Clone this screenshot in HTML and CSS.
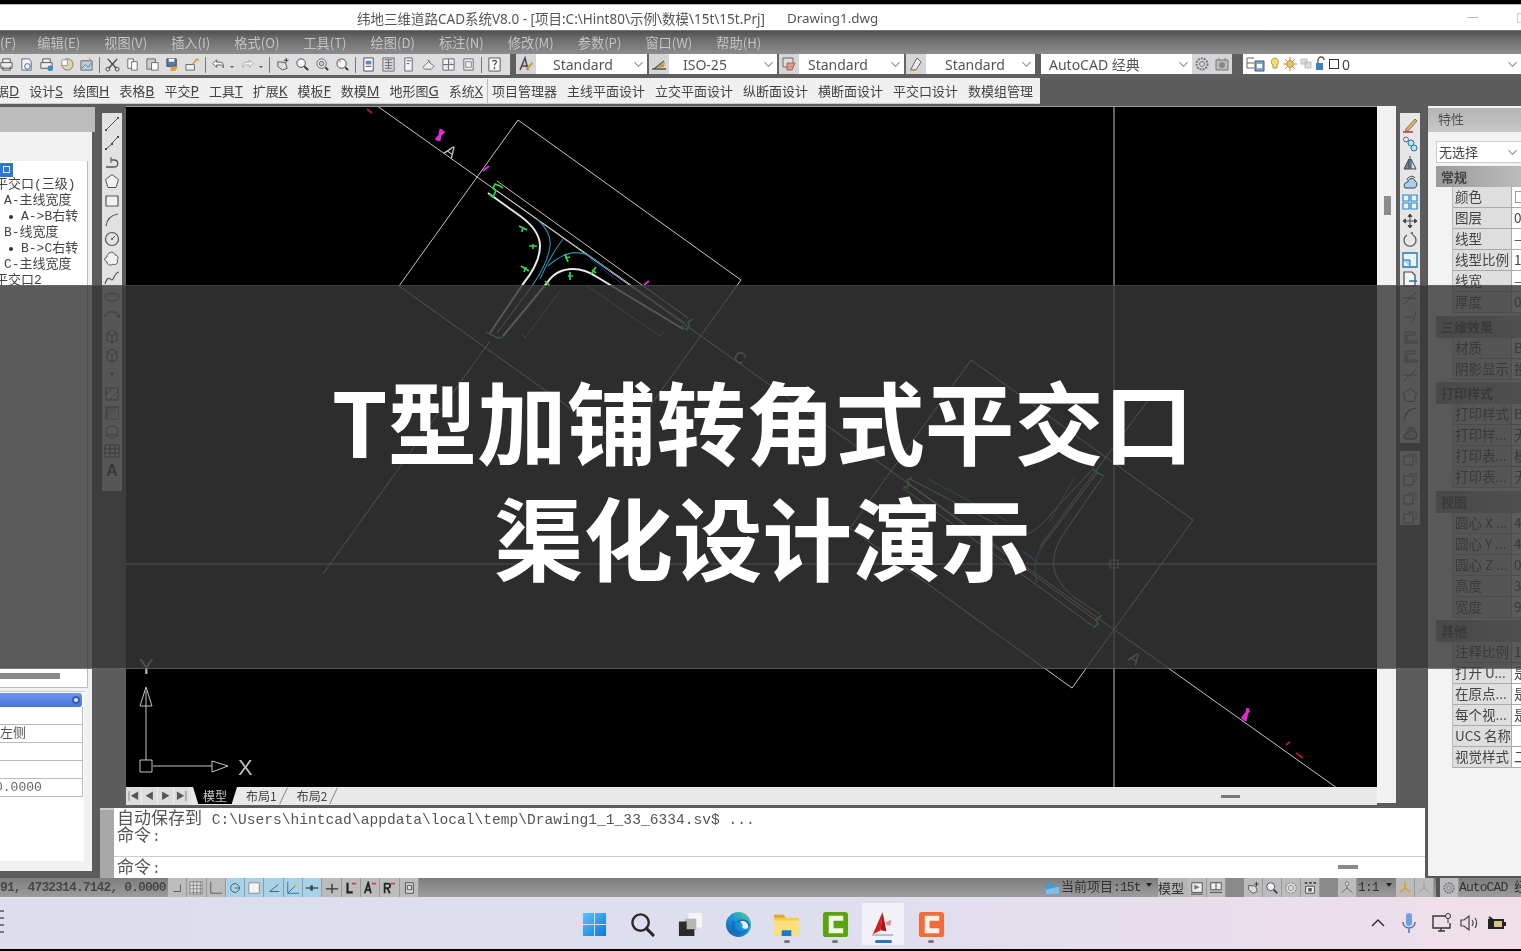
FILE: index.html
```html
<!DOCTYPE html>
<html lang="zh-CN">
<head>
<meta charset="utf-8">
<title>纬地三维道路CAD系统V8.0</title>
<link rel="stylesheet" href="styles.css">
</head>
<body>
<svg class="defs" aria-hidden="true">
  <symbol id="i-print" viewBox="0 0 16 16"><path d="M4 6V2h8v4M2 6h12v6H2zM4 10v4h8v-4" fill="#eee" stroke="#555"/></symbol>
  <symbol id="i-prev" viewBox="0 0 16 16"><path d="M3 2h8l2 3v9H3z" fill="#f4f4f4" stroke="#667"/><circle cx="9" cy="10" r="3" fill="none" stroke="#36a"/></symbol>
  <symbol id="i-plot" viewBox="0 0 16 16"><path d="M4 6V2h8v4M2 6h12v6H2z" fill="#eee" stroke="#555"/><circle cx="12" cy="12" r="3" fill="#3a8fc0"/></symbol>
  <symbol id="i-globe" viewBox="0 0 16 16"><circle cx="9" cy="8" r="6" fill="#e3d6a0" stroke="#777"/><path d="M3 3h6v6H3z" fill="#fff" stroke="#999"/></symbol>
  <symbol id="i-pub" viewBox="0 0 16 16"><path d="M2 4h12v10H2z" fill="#bcd" stroke="#667"/><path d="M3 12l4-4 3 3 3-5" fill="none" stroke="#686"/><path d="M10 1l4 3" stroke="#c93"/></symbol>
  <symbol id="i-cut" viewBox="0 0 16 16"><path d="M3 2l9 10M13 2L4 12" stroke="#444" stroke-width="1.4"/><circle cx="3" cy="13" r="2" fill="none" stroke="#444"/><circle cx="13" cy="13" r="2" fill="none" stroke="#444"/></symbol>
  <symbol id="i-copy" viewBox="0 0 16 16"><path d="M3 2h6v10H3z" fill="#fff" stroke="#666"/><path d="M7 5h6v9H7z" fill="#fff" stroke="#666"/></symbol>
  <symbol id="i-paste" viewBox="0 0 16 16"><path d="M2 2h9v11H2z" fill="#ccc" stroke="#666"/><path d="M7 6h7v8H7z" fill="#fff" stroke="#666"/></symbol>
  <symbol id="i-match" viewBox="0 0 16 16"><path d="M2 2h10v8H2z" fill="#5577aa" stroke="#446"/><path d="M4 2h6v3H4z" fill="#fff"/><path d="M6 10h8l-3 5H6z" fill="#d9a441"/></symbol>
  <symbol id="i-brush" viewBox="0 0 16 16"><path d="M1 8h9v6H1z" fill="#eee" stroke="#666"/><path d="M8 8l5-6M11 3h4" stroke="#c93" stroke-width="1.5"/></symbol>
  <symbol id="i-undo" viewBox="0 0 16 16"><path d="M6 3L2 7l4 4V8.500h4c2 0 3 1 3 3 1-3-.5-6-3-6H6z" fill="#fff" stroke="#555"/></symbol>
  <symbol id="i-redo" viewBox="0 0 16 16"><path d="M10 3l4 4-4 4V8.500H6c-2 0-3 1-3 3-1-3 .5-6 3-6h4z" fill="#f4f4f4" stroke="#aaa"/></symbol>
  <symbol id="i-drop" viewBox="0 0 6 16"><path d="M1 8h4L3 10z" fill="#555"/></symbol>
  <symbol id="i-pan" viewBox="0 0 16 16"><path d="M3 5l8 1 2 6-5 2-5-4z" fill="#ddd" stroke="#555"/><path d="M12 1v5M9.500 3.500h5" stroke="#333"/></symbol>
  <symbol id="i-zoom" viewBox="0 0 16 16"><circle cx="6.500" cy="6.500" r="4.500" fill="#f4f8fb" stroke="#445"/><path d="M10 10l4 4" stroke="#333" stroke-width="2"/></symbol>
  <symbol id="i-zoom2" viewBox="0 0 16 16"><circle cx="7" cy="7" r="5" fill="#f4f8fb" stroke="#556"/><circle cx="7" cy="7" r="2.500" fill="#ccc" stroke="#556"/><path d="M11 11l3 3" stroke="#333" stroke-width="2"/></symbol>
  <symbol id="i-zoom3" viewBox="0 0 16 16"><circle cx="7" cy="7" r="5" fill="#f4f8fb" stroke="#445"/><path d="M11 11l3 3" stroke="#333" stroke-width="2"/><path d="M3 3l3 2" stroke="#c33"/></symbol>
  <symbol id="i-panel1" viewBox="0 0 16 16"><path d="M3 1h10v14H3z" fill="#fff" stroke="#446"/><path d="M5 4h6v4H5z" fill="#5d86b3"/><path d="M5 10h6" stroke="#446"/></symbol>
  <symbol id="i-panel2" viewBox="0 0 16 16"><path d="M2 1h12v14H2z" fill="#ddd" stroke="#667"/><path d="M4 3h8M4 6h8M4 9h8M4 12h8M8 3v10" stroke="#667"/></symbol>
  <symbol id="i-panel3" viewBox="0 0 16 16"><path d="M4 1h8v14H4z" fill="#f2f2f2" stroke="#667"/><path d="M6 4h5M6 7h3" stroke="#667"/></symbol>
  <symbol id="i-stamp" viewBox="0 0 16 16"><path d="M2 11l6-6 6 5-3 3H4z" fill="#eee" stroke="#667"/><path d="M7 3l3 2" stroke="#667"/></symbol>
  <symbol id="i-calc" viewBox="0 0 16 16"><path d="M2 2h6v6H2zM8 8h6v6H8zM8 2h6v6M2 8v6h6" fill="#f2f2f2" stroke="#667"/></symbol>
  <symbol id="i-note" viewBox="0 0 16 16"><path d="M3 2h10v12H3z" fill="#eee" stroke="#667"/><path d="M5 5h6v6H5z" fill="none" stroke="#889"/></symbol>
  <symbol id="i-help" viewBox="0 0 16 16"><path d="M2 1h12v14H2z" fill="#f8f8f8" stroke="#555"/><path d="M6 5c0-2 4-2 4 0 0 2-2 2-2 4M8 11v2" fill="none" stroke="#444" stroke-width="1.3"/></symbol>
  <symbol id="i-tstyle" viewBox="0 0 16 16"><path d="M2 14L7 2l3 12M4 10h6" fill="none" stroke="#445" stroke-width="1.500"/><path d="M9 14l6-6-1-2-6 6z" fill="#c93"/></symbol>
  <symbol id="i-dstyle" viewBox="0 0 16 16"><path d="M1 13h14M3 13l10-8" stroke="#555" stroke-width="1.300"/><path d="M6 12l8-6-1 5z" fill="#c93"/></symbol>
  <symbol id="i-tbl" viewBox="0 0 16 16"><path d="M2 2h10v9H2z" fill="#ddd" stroke="#667"/><path d="M6 7h8l-3 7H6z" fill="#d98" stroke="#a65"/></symbol>
  <symbol id="i-mls" viewBox="0 0 16 16"><path d="M3 13L9 2l4 4-5 8z" fill="#eee" stroke="#667"/><path d="M2 14h5" stroke="#c93" stroke-width="2"/></symbol>
  <symbol id="i-gear" viewBox="0 0 16 16"><circle cx="8" cy="8" r="5.500" fill="none" stroke="#778" stroke-width="2" stroke-dasharray="2 1"/><circle cx="8" cy="8" r="2.500" fill="none" stroke="#778"/></symbol>
  <symbol id="i-shot" viewBox="0 0 16 16"><path d="M2 4h12v10H2z" fill="#bbb" stroke="#777"/><path d="M4 2l2 2M12 2l-2 2" stroke="#777"/><circle cx="8" cy="9" r="3" fill="#888"/></symbol>
  <symbol id="d-line" viewBox="0 0 16 16"><path d="M2 14L14 2" stroke="#555" fill="none"/><path d="M1 13h2v2H1zM13 1h2v2h-2z" fill="#555"/></symbol>
  <symbol id="d-pline" viewBox="0 0 16 16"><path d="M2 14l5-4 2-3 5-5" stroke="#555" fill="none"/><path d="M1 13h2v2H1zM7 8h2v2H7zM13 1h2v2h-2z" fill="#444"/></symbol>
  <symbol id="d-hook" viewBox="0 0 16 16"><path d="M2 13h8c5 0 5-7 0-7H7" stroke="#555" fill="none" stroke-width="1.300"/><path d="M7 3v6" stroke="#555"/></symbol>
  <symbol id="d-poly" viewBox="0 0 16 16"><path d="M8 1.500l6.500 5-2.500 8H4l-2.500-8z" fill="#f2f2f2" stroke="#555"/></symbol>
  <symbol id="d-rect" viewBox="0 0 16 16"><path d="M2 3h12v10H2z" fill="#f2f2f2" stroke="#555" stroke-width="1.200"/></symbol>
  <symbol id="d-arc" viewBox="0 0 16 16"><path d="M2 14C3 7 8 3 14 2" fill="none" stroke="#555" stroke-width="1.200"/></symbol>
  <symbol id="d-circ" viewBox="0 0 16 16"><circle cx="8" cy="8" r="6.500" fill="none" stroke="#555" stroke-width="1.200"/><path d="M8 8l3-3" stroke="#555"/><circle cx="8" cy="8" r="1" fill="#555"/></symbol>
  <symbol id="d-cloud" viewBox="0 0 16 16"><path d="M5 2c3-2 6 0 6 2 3 0 4 4 2 5 2 3-2 6-4 4-2 2-6 1-6-2-3-1-3-5 0-5 0-2 1-3 2-4z" fill="#f2f2f2" stroke="#555"/></symbol>
  <symbol id="d-spline" viewBox="0 0 16 16"><path d="M1 14c3-10 5-4 7-4s2-7 7-8" fill="none" stroke="#555" stroke-width="1.200"/></symbol>
  <symbol id="d-ell" viewBox="0 0 16 16"><ellipse cx="8" cy="8" rx="7" ry="4" fill="none" stroke="#555"/></symbol>
  <symbol id="d-earc" viewBox="0 0 16 16"><path d="M1 9c0-7 14-7 14 0" fill="none" stroke="#555"/><path d="M13 7l2 3 1-3" stroke="#555" fill="none"/></symbol>
  <symbol id="d-block" viewBox="0 0 16 16"><path d="M3 5l5-3 5 3v7l-5 3-5-3z" fill="#e8e8e8" stroke="#555"/><path d="M3 5l5 3 5-3M8 8v7" stroke="#555" fill="none"/></symbol>
  <symbol id="d-dot" viewBox="0 0 16 16"><circle cx="8" cy="8" r="1.500" fill="#555"/></symbol>
  <symbol id="d-hatch" viewBox="0 0 16 16"><path d="M2 2h12v12H2z" fill="#eee" stroke="#555"/><path d="M2 9l7-7M5 14l9-9M10 14l4-4" stroke="#777"/></symbol>
  <symbol id="d-grad" viewBox="0 0 16 16"><path d="M2 2h12v12H2z" fill="#bbb" stroke="#555"/><path d="M2 14L14 2v12z" fill="#ddd"/></symbol>
  <symbol id="d-reg" viewBox="0 0 16 16"><circle cx="8" cy="8" r="6" fill="#eee" stroke="#555"/><path d="M3 11h10" stroke="#555"/></symbol>
  <symbol id="d-table" viewBox="0 0 16 16"><path d="M1 2h14v12H1z" fill="#f2f2f2" stroke="#555"/><path d="M1 6h14M1 10h14M6 2v12M11 2v12" stroke="#555"/></symbol>
  <symbol id="m-erase" viewBox="0 0 16 16"><path d="M3 13L13 2l2 2L6 14z" fill="#d9b25f" stroke="#876"/><path d="M1 15h10" stroke="#b33" stroke-width="1.500"/></symbol>
  <symbol id="m-copy" viewBox="0 0 16 16"><circle cx="4" cy="3.500" r="2.500" fill="none" stroke="#667"/><circle cx="9" cy="7" r="3" fill="#bfe0f4" stroke="#27a"/><circle cx="12" cy="12" r="3" fill="#bfe0f4" stroke="#27a"/></symbol>
  <symbol id="m-mirror" viewBox="0 0 16 16"><path d="M8 1v14" stroke="#444"/><path d="M7 4L2 14h5z" fill="#6d8296" stroke="#345"/><path d="M9 4l5 10H9z" fill="#cfe3ef" stroke="#345"/></symbol>
  <symbol id="m-offset" viewBox="0 0 16 16"><path d="M3 14c-2-3 0-6 3-6 0-4 6-5 7-1 3 1 2 7-1 7z" fill="#a9d0e6" stroke="#345"/><path d="M5 6c1-4 6-5 8-2" fill="none" stroke="#345"/></symbol>
  <symbol id="m-array" viewBox="0 0 16 16"><path d="M1 1h6v6H1zM9 1h6v6H9zM1 9h6v6H1zM9 9h6v6H9z" fill="#e8f3fa" stroke="#2a86c8" stroke-width="1.200"/></symbol>
  <symbol id="m-move" viewBox="0 0 16 16"><path d="M8 1v14M1 8h14M8 1L6 3.500h4zM8 15l-2-2.500h4zM1 8l2.500-2v4zM15 8l-2.500-2v4z" fill="#445" stroke="#445"/></symbol>
  <symbol id="m-rot" viewBox="0 0 16 16"><path d="M5 3a6 6 0 1 0 6 0" fill="none" stroke="#555" stroke-width="1.300"/><path d="M11 3l-3-2 3-1z" fill="#555"/></symbol>
  <symbol id="m-scale" viewBox="0 0 16 16"><path d="M1 1h14v14H1z" fill="#e8f3fa" stroke="#27a" stroke-width="1.300"/><path d="M1 8h7v7" fill="#a9d0e6" stroke="#27a"/></symbol>
  <symbol id="m-stretch" viewBox="0 0 16 16"><path d="M2 1h8l3 3v11H2z" fill="#f4f4f4" stroke="#445" stroke-width="1.200"/><path d="M7 10h8" stroke="#27a" stroke-width="1.500"/></symbol>
  <symbol id="m-trim" viewBox="0 0 16 16"><path d="M2 14L14 2M1 8h14" stroke="#666" fill="none"/></symbol>
  <symbol id="m-ext" viewBox="0 0 16 16"><path d="M2 8h8M10 14l4-12" stroke="#666" fill="none"/></symbol>
  <symbol id="m-brk" viewBox="0 0 16 16"><path d="M3 3h10v3H5v6h10v2H3z" fill="none" stroke="#666"/></symbol>
  <symbol id="m-mini" viewBox="0 0 16 16"><path d="M2 4h9v9H2z" fill="#eee" stroke="#666"/><path d="M6 2h8v8" fill="none" stroke="#888"/></symbol>
</svg>

<div class="page">
  <div class="app">
    <div class="strip"></div>
    <header class="titlebar">
      <span class="ttext">纬地三维道路CAD系统V8.0 - [项目:C:\Hint80\示例\数模\15t\15t.Prj]</span>
      <span class="ttext tdoc">Drawing1.dwg</span>
      <span class="winbtn winmin"></span>
      <span class="winbtn winmax"></span>
    </header>

    <nav class="menubar">
      <span>(F)</span><span>编辑(E)</span><span>视图(V)</span><span>插入(I)</span><span>格式(O)</span><span>工具(T)</span><span>绘图(D)</span><span>标注(N)</span><span>修改(M)</span><span>参数(P)</span><span>窗口(W)</span><span>帮助(H)</span>
    </nav>

    <div class="toolbar">
      <div class="tgroup ticons">
        <svg class="ic"><use href="#i-print"/></svg><svg class="ic"><use href="#i-prev"/></svg><svg class="ic"><use href="#i-plot"/></svg><svg class="ic"><use href="#i-globe"/></svg><svg class="ic"><use href="#i-pub"/></svg>
        <i class="sep"></i>
        <svg class="ic"><use href="#i-cut"/></svg><svg class="ic"><use href="#i-copy"/></svg><svg class="ic"><use href="#i-paste"/></svg><svg class="ic"><use href="#i-match"/></svg><svg class="ic"><use href="#i-brush"/></svg>
        <i class="sep"></i>
        <svg class="ic"><use href="#i-undo"/></svg><svg class="ic-drop"><use href="#i-drop"/></svg><svg class="ic"><use href="#i-redo"/></svg><svg class="ic-drop"><use href="#i-drop"/></svg>
        <i class="sep"></i>
        <svg class="ic"><use href="#i-pan"/></svg><svg class="ic"><use href="#i-zoom"/></svg><svg class="ic"><use href="#i-zoom2"/></svg><svg class="ic"><use href="#i-zoom3"/></svg>
        <i class="sep"></i>
        <svg class="ic"><use href="#i-panel1"/></svg><svg class="ic"><use href="#i-panel2"/></svg><svg class="ic"><use href="#i-panel3"/></svg><svg class="ic"><use href="#i-stamp"/></svg><svg class="ic"><use href="#i-calc"/></svg><svg class="ic"><use href="#i-note"/></svg>
        <i class="sep"></i>
        <svg class="ic"><use href="#i-help"/></svg>
      </div>
      <div class="tgroup combos">
        <div class="combo c1"><svg class="ic cic"><use href="#i-tstyle"/></svg><span class="cval v1">Standard</span><i class="chev"></i></div>
        <div class="combo c2"><svg class="ic cic"><use href="#i-dstyle"/></svg><span class="cval v2">ISO-25</span><i class="chev"></i></div>
        <div class="combo c3"><svg class="ic cic"><use href="#i-tbl"/></svg><span class="cval v3">Standard</span><i class="chev"></i></div>
        <div class="combo c4"><svg class="ic cic"><use href="#i-mls"/></svg><span class="cval v4">Standard</span><i class="chev"></i></div>
      </div>
      <div class="tgroup wsp">
        <div class="combo c5"><span class="cval v5">AutoCAD 经典</span><i class="chev"></i></div>
        <svg class="ic gearic"><use href="#i-gear"/></svg><svg class="ic gearic"><use href="#i-shot"/></svg>
      </div>
      <div class="tgroup layer">
        <svg class="lic" viewBox="0 0 20 18"><path d="M1 3h7M1 8h7M1 13h7M1 3v10" stroke="#666" fill="none"/><path d="M9 6h9v10H9z" fill="#7fa8cc" stroke="#456"/><path d="M11 9h5v4h-5z" fill="#fff"/></svg>
        <svg class="lmini" viewBox="0 0 60 16"><path d="M6 2a4 4 0 0 1 3 7v3H5V9a4 4 0 0 1 1-7z" fill="#f4de82" stroke="#b99a3c"/><circle cx="22" cy="8" r="3.500" fill="#e8c560" stroke="#b9923c"/><path d="M22 1v3M22 12v3M15 8h3M26 8h3M17 3l2 2M25 11l2 2M17 13l2-2M25 5l2-2" stroke="#b9923c"/><path d="M33 3h6v5h-6zM37 6h6v6h-6z" fill="#ddd" stroke="#bbb"/><path d="M48 7h7v7h-7z" fill="#3f82c2"/><path d="M50 7V4a3 3 0 0 1 6 0" fill="none" stroke="#555" stroke-width="1.300"/></svg>
        <i class="lsq"></i><span class="lname">0</span><i class="chev chev-end"></i>
      </div>
    </div>

    <div class="toolbar2">
      <div class="tb2in">
        <span>据<u>D</u></span><span>设计<u>S</u></span><span>绘图<u>H</u></span><span>表格<u>B</u></span><span>平交<u>P</u></span><span>工具<u>T</u></span><span>扩展<u>K</u></span><span>模板<u>F</u></span><span>数模<u>M</u></span><span>地形图<u>G</u></span><span>系统<u>X</u></span>
        <i class="vsep"></i>
        <span>项目管理器</span><span>主线平面设计</span><span>立交平面设计</span><span>纵断面设计</span><span>横断面设计</span><span>平交口设计</span><span>数模组管理</span>
      </div>
    </div>

    <main class="work">
      <aside class="left">
        <div class="lbar"></div>
        <div class="lbody">
          <div class="tree">
            <div class="tsel"><i></i></div>
            <div class="tl">平交口(三级)</div>
            <div class="tl ind1">A-主线宽度</div>
            <div class="tl ind2"><b></b>A-&gt;B右转</div>
            <div class="tl ind1">B-线宽度</div>
            <div class="tl ind2"><b></b>B-&gt;C右转</div>
            <div class="tl ind1">C-主线宽度</div>
            <div class="tl">平交口2</div>
            <div class="hscroll"><i></i></div>
          </div>
          <div class="pbox">
            <div class="phead"><i></i></div>
            <div class="prw"></div>
            <div class="prw">左侧</div>
            <div class="prw"></div>
            <div class="prw"></div>
            <div class="prw pclip">0.0000</div>
          </div>
        </div>
      </aside>

      <section class="center">
        <div class="upper">
          <div class="dbar">
            <svg class="dic"><use href="#d-line"/></svg><svg class="dic"><use href="#d-pline"/></svg><svg class="dic"><use href="#d-hook"/></svg><svg class="dic"><use href="#d-poly"/></svg><svg class="dic"><use href="#d-rect"/></svg><svg class="dic"><use href="#d-arc"/></svg><svg class="dic"><use href="#d-circ"/></svg><svg class="dic"><use href="#d-cloud"/></svg><svg class="dic"><use href="#d-spline"/></svg><svg class="dic"><use href="#d-ell"/></svg><svg class="dic"><use href="#d-earc"/></svg><svg class="dic"><use href="#d-block"/></svg><svg class="dic"><use href="#d-block"/></svg><svg class="dic"><use href="#d-dot"/></svg><svg class="dic"><use href="#d-hatch"/></svg><svg class="dic"><use href="#d-grad"/></svg><svg class="dic"><use href="#d-reg"/></svg><svg class="dic"><use href="#d-table"/></svg><span class="dic dictxt">A</span>
          </div>
          <div class="canvcol">
            <div class="canvas">
              <svg class="cad" viewBox="126 106 1251 681">
                <g class="w">
                  <path d="M366 97L1337 787"/>
                  <path d="M518 119L741 279L622 444L399 285Z"/>
                  <path d="M971 359L1193 519L1072 687L850 527Z"/>
                  <path d="M323 573L490 340"/>
                  <path d="M1040 545L1155 390"/>
                  <path d="M1114 106V787M126 563H1377"/>
                  <path d="M1110 559h8v8h-8z"/>
                  <path d="M497 180L688 317M493 187L685 322"/>
                  <path d="M497 332L532 285M503 335L547 282"/>
                  <path d="M503 335L547 282Q556 268 573 268Q585 268 597 276L683 328" class="t"/>
                  <path d="M488 192L516 212Q540 228 540 245Q540 262 523 283L490 332" class="t"/>
                  <path d="M910 478L1000 525Q1020 535 1030 532Q1040 527 1058 505L1093 468"/>
                  <path d="M1102 477L1062 535Q1050 555 1055 572Q1060 585 1075 597L1100 613"/>
                  <path d="M1097 472L1040 548M903 487L1093 625M907 482L1097 620"/>
                  <path d="M146 690V759M153 765H212"/>
                  <path d="M146 686L152 705H140ZM140 759h12v12h-12zM212 760L228 765L212 771Z"/>
                </g>
                <g class="c">
                  <path d="M537 218Q552 232 550 245Q548 262 532 285M563 238Q550 255 540 278M548 265Q570 245 590 255L610 270"/>
                  <path d="M1023 550Q1035 560 1040 563M1040 548Q1032 565 1037 582"/>
                </g>
                <path class="db" d="M590 258L622 283"/>
                <g class="g">
                  <path d="M489 193l4 3 3-6-3-3 2-4 5 2 3 2M486 331l6 3 6 3 5-1M681 325l6 4 2-5-1-3 5-3M903 485l4 2 2-5-2-3 5-2M1092 468l6 4 6 3M1093 627l5-4-2-4 6-5"/>
                  <path d="M519 225l8 4m-4-3l-1 5M529 245h8m-4-2v5M521 265l8 5m-3-4l-2 5M565 253l3 8m-3-4l5-1M570 271v8m-2-4h5M596 266l-5 7m1-4l4 3M545 280l5 5"/>
                  <path class="gd" d="M560 290L525 337M587 285L660 335M521 333l6 5M660 335l4-5M928 478L1007 520M1050 520L1075 475"/>
                </g>
                <g class="m">
                  <path d="M436 139L444 130M441 128l-2 12" stroke-width="3"/>
                  <path d="M1242 718L1249 709M1248 707l-3 13" stroke-width="3"/>
                  <path d="M483 170l6-5M644 284l5-4" stroke-width="2"/>
                </g>
                <path class="r" d="M367 108l5 4M1286 744l4-3M1296 752l7 5"/>
                <text class="cadt" x="446" y="157" transform="rotate(35 453 150)">A</text>
                <text class="cadt" x="735" y="363" transform="rotate(35 742 356)">C</text>
                <text class="cadt" x="1130" y="664" transform="rotate(35 1137 657)">A</text>
                <text class="cadt big" x="238" y="774">X</text>
                <text class="cadt big" x="139" y="673">Y</text>
              </svg>
            </div>
            <div class="tabs">
              <div class="nav"><i>|◀</i><i>◀</i><i>▶</i><i>▶|</i></div>
              <span class="tab on">模型</span><span class="tab">布局1</span><i class="tsl"></i><span class="tab">布局2</span><i class="tsl"></i>
              <i class="thandle"></i>
            </div>
          </div>
          <div class="vscroll"><i></i></div>
          <div class="mbar">
            <svg class="dic"><use href="#m-erase"/></svg><svg class="dic"><use href="#m-copy"/></svg><svg class="dic"><use href="#m-mirror"/></svg><svg class="dic"><use href="#m-offset"/></svg><svg class="dic"><use href="#m-array"/></svg><svg class="dic"><use href="#m-move"/></svg><svg class="dic"><use href="#m-rot"/></svg><svg class="dic"><use href="#m-scale"/></svg><svg class="dic"><use href="#m-stretch"/></svg><svg class="dic"><use href="#m-trim"/></svg><svg class="dic"><use href="#m-ext"/></svg><svg class="dic"><use href="#m-brk"/></svg><svg class="dic"><use href="#m-brk"/></svg><svg class="dic"><use href="#m-trim"/></svg><svg class="dic"><use href="#d-poly"/></svg><svg class="dic"><use href="#d-arc"/></svg><svg class="dic"><use href="#m-offset"/></svg>
            <i class="mgap"></i>
            <svg class="dic"><use href="#m-mini"/></svg><svg class="dic"><use href="#m-mini"/></svg><svg class="dic"><use href="#m-mini"/></svg><svg class="dic"><use href="#m-mini"/></svg>
          </div>
        </div>
        <div class="cmd">
          <div class="grip"></div>
          <div class="cbody">
            <div class="hist">
              <div class="cl"><span class="cj">自动保存到</span> C:\Users\hintcad\appdata\local\temp\Drawing1_1_33_6334.sv$ ...</div>
              <div class="cl"><span class="cj">命令</span>:</div>
            </div>
            <div class="cin"><span class="cj">命令</span>:<i></i></div>
          </div>
        </div>
      </section>

      <aside class="props">
        <div class="ptitle">特性</div>
        <div class="pbody">
          <div class="psel"><span>无选择</span><i class="chev"></i></div>
          <div class="sect first">常规</div>
          <div class="row"><b>颜色</b><span>□</span></div>
          <div class="row"><b>图层</b><span>0</span></div>
          <div class="row"><b>线型</b><span>—</span></div>
          <div class="row"><b>线型比例</b><span>1</span></div>
          <div class="row"><b>线宽</b><span>—</span></div>
          <div class="row"><b>厚度</b><span>0</span></div>
          <div class="sect">三维效果</div>
          <div class="row"><b>材质</b><span>B</span></div>
          <div class="row"><b>阴影显示</b><span>投</span></div>
          <div class="sect">打印样式</div>
          <div class="row"><b>打印样式</b><span>B</span></div>
          <div class="row"><b>打印样...</b><span>无</span></div>
          <div class="row"><b>打印表...</b><span>模</span></div>
          <div class="row"><b>打印表...</b><span>无</span></div>
          <div class="sect">视图</div>
          <div class="row"><b>圆心 X ...</b><span>4</span></div>
          <div class="row"><b>圆心 Y ...</b><span>4</span></div>
          <div class="row"><b>圆心 Z ...</b><span>0</span></div>
          <div class="row"><b>高度</b><span>3</span></div>
          <div class="row"><b>宽度</b><span>9</span></div>
          <div class="sect">其他</div>
          <div class="row"><b>注释比例</b><span>1</span></div>
          <div class="row"><b>打开 U...</b><span>是</span></div>
          <div class="row"><b>在原点...</b><span>是</span></div>
          <div class="row"><b>每个视...</b><span>是</span></div>
          <div class="row"><b>UCS 名称</b><span></span></div>
          <div class="row"><b>视觉样式</b><span>二</span></div>
        </div>
      </aside>
    </main>

    <footer class="status">
      <span class="coords">91, 4732314.7142, 0.0000</span>
      <div class="sicons">
        <span class="si"><svg viewBox="0 0 16 16"><path d="M12 4v8H4" fill="none" stroke="#555"/></svg></span>
        <span class="si"><svg viewBox="0 0 16 16"><path d="M1 1h14v14H1zM1 5h14M1 9h14M1 13h14M5 1v14M9 1v14M13 1v14" fill="#ddd" stroke="#666" stroke-width=".7"/></svg></span>
        <span class="si"><svg viewBox="0 0 16 16"><path d="M2 1v13h13" fill="none" stroke="#555"/></svg></span>
        <span class="si on"><svg viewBox="0 0 16 16"><circle cx="8" cy="8" r="5" fill="none" stroke="#456"/><path d="M8 8h6" stroke="#456"/></svg></span>
        <span class="si on"><svg viewBox="0 0 16 16"><path d="M2 2h12v12H2z" fill="#f4f4f4" stroke="#888"/><path d="M2 2h4" stroke="#d88"/></svg></span>
        <span class="si on"><svg viewBox="0 0 16 16"><path d="M13 4L3 12h11" fill="none" stroke="#456"/></svg></span>
        <span class="si on"><svg viewBox="0 0 16 16"><path d="M2 1v13h13M2 14L12 4" fill="none" stroke="#369"/><path d="M10 2l4 2-3 3z" fill="#e5c14e"/></svg></span>
        <span class="si on"><svg viewBox="0 0 16 16"><path d="M1 8h14" stroke="#345" stroke-width="1.500"/><path d="M6 5h3v6H6z" fill="#345"/></svg></span>
        <span class="si"><svg viewBox="0 0 16 16"><path d="M1 9h14M8 3v11" stroke="#333" stroke-width="1.500"/></svg></span>
        <span class="si"><svg viewBox="0 0 16 16"><path d="M4 2v11h6" fill="none" stroke="#222" stroke-width="2.500"/><path d="M9 3h5" stroke="#c44" stroke-width="2"/></svg></span>
        <span class="si"><svg viewBox="0 0 16 16"><path d="M2 14L6 2l3 12M4 10h4" fill="none" stroke="#222" stroke-width="2"/><path d="M10 3h5" stroke="#c44" stroke-width="2"/></svg></span>
        <span class="si"><svg viewBox="0 0 16 16"><path d="M3 14V3h4c3 0 3 5 0 5H3M6 8l3 6" fill="none" stroke="#222" stroke-width="2"/><path d="M10 3h5" stroke="#c44" stroke-width="2"/></svg></span>
        <span class="si"><svg viewBox="0 0 16 16"><path d="M4 2h9v12H4z" fill="#ddd" stroke="#444"/><path d="M6 5h5v5H6z" fill="none" stroke="#444"/></svg></span>
      </div>
      <div class="sright">
        <svg class="sfold" viewBox="0 0 16 16"><path d="M1 3h6v3h8v9H1z" fill="#3f9ad6"/><path d="M1 10l14-3v8H1z" fill="#78c0ea"/></svg>
        <span class="stx proj"><span class="sc">当前项目</span>:15t</span><i class="caret"></i>
        <span class="stx model">模型</span>
        <span class="si sq"><svg viewBox="0 0 16 16"><path d="M2 2h12v11H2z" fill="#eee" stroke="#444"/><path d="M5 4l6 3-6 3z" fill="#777"/><path d="M1 15h14" stroke="#444"/></svg></span>
        <span class="si sq"><svg viewBox="0 0 16 16"><path d="M2 2h12v8H2z" fill="#eee" stroke="#444"/><path d="M8 2v8" stroke="#444"/><path d="M1 13h14" stroke="#444"/></svg></span>
        <i class="sdark"></i>
        <span class="si sq"><svg viewBox="0 0 16 16"><use href="#i-pan"/></svg></span>
        <span class="si sq"><svg viewBox="0 0 16 16"><use href="#i-zoom"/></svg></span>
        <span class="si sq"><svg viewBox="0 0 16 16"><circle cx="8" cy="8" r="6" fill="#ddd" stroke="#888"/><circle cx="8" cy="8" r="3" fill="none" stroke="#888"/></svg></span>
        <span class="si sq"><svg viewBox="0 0 16 16"><path d="M3 6h10v8H3z" fill="#eee" stroke="#444"/><path d="M2 2h3M7 2h3M12 2h3" stroke="#444" stroke-width="2"/><path d="M6 8h4v4H6z" fill="#555"/></svg></span>
        <i class="sdark"></i>
        <span class="si sq"><svg viewBox="0 0 16 16"><path d="M8 1v7L2 13M8 8l6 5" fill="none" stroke="#667"/><circle cx="8" cy="3" r="2" fill="#eee" stroke="#667"/></svg></span>
        <span class="stx ratio">1:1</span><i class="caret"></i>
        <span class="si sq"><svg viewBox="0 0 16 16"><path d="M8 1v7L2 13M8 8l6 5" fill="none" stroke="#d9a441" stroke-width="2"/></svg></span>
        <span class="si sq"><svg viewBox="0 0 16 16"><path d="M8 1v7L2 13M8 8l6 5" fill="none" stroke="#999"/></svg></span>
        <i class="sdark thin"></i>
        <span class="si sq"><svg viewBox="0 0 16 16"><use href="#i-gear"/></svg></span>
        <span class="stx acad">AutoCAD 经典</span>
      </div>
    </footer>

    <div class="taskbar">
      <div class="widget"></div>
      <div class="tcenter">
        <span class="tk"><svg viewBox="0 0 28 28"><defs><linearGradient id="wg" x1="0" y1="0" x2="1" y2="1"><stop offset="0" stop-color="#5cc4f4"/><stop offset="1" stop-color="#0f78d6"/></linearGradient></defs><path d="M2 2h11.500v11.500H2zM14.500 2H26v11.500H14.500zM2 14.500h11.500V26H2zM14.500 14.500H26V26H14.500z" fill="url(#wg)"/></svg></span>
        <span class="tk"><svg viewBox="0 0 28 28"><circle cx="12" cy="12" r="8.500" fill="none" stroke="#2a2a2a" stroke-width="2.500"/><path d="M18 18l7 7" stroke="#2a2a2a" stroke-width="3" stroke-linecap="round"/></svg></span>
        <span class="tk"><svg viewBox="0 0 28 28"><path d="M12 2h14v15H12z" fill="#f6f6f8"/><path d="M8 8h12v12H8z" fill="#b5b5b5"/><path d="M2 11h8v8h8v7H2z" fill="#2b2b2b"/></svg></span>
        <span class="tk tk-p"><svg viewBox="0 0 28 28"><defs><linearGradient id="eg" x1="0" y1="1" x2="1" y2="0"><stop offset="0" stop-color="#0c59a8"/><stop offset=".55" stop-color="#1f9bd8"/><stop offset="1" stop-color="#5fd07c"/></linearGradient></defs><circle cx="14" cy="14" r="13" fill="url(#eg)"/><path d="M26 16c0-7-9-10-14-5-3 3-2 9 3 10 4 1 7-1 9-3-2 6-11 9-17 5C8 21 5 15 8 10" fill="#1570c4"/><path d="M15 11c5-2 9 1 9 5 0 3-5 3-6 1 1-3-1-5-3-6z" fill="#eef2f8"/></svg><b></b></span>
        <span class="tk tk-p run"><svg viewBox="0 0 28 28"><path d="M1 4h10l2 3h14v19H1z" fill="#f5cd47"/><path d="M1 4h10l2 3H1z" fill="#d9a92e"/><path d="M1 10h26v16H1z" fill="#fbe17e"/><path d="M9 20h10v6H9z" fill="#1b78d0"/></svg><b></b></span>
        <span class="tk tk-p run"><svg viewBox="0 0 28 28"><rect x="1" y="1" width="26" height="26" rx="3" fill="#5aa412"/><path d="M7 5h15v5H12v8h10v5H7z" fill="#f2f7ea"/></svg><b></b></span>
        <span class="tk tk-p active"><svg viewBox="0 0 28 28"><path d="M13 1L3 24l8-4z" fill="#d71920"/><path d="M13 1l4 20-6-1z" fill="#a9141a"/><path d="M16 12l6-3-1 6h-3z" fill="#e88"/><path d="M2 25h22" stroke="#bbb" stroke-width="2"/></svg><b></b></span>
        <span class="tk tk-p run"><svg viewBox="0 0 28 28"><rect x="1" y="1" width="26" height="26" rx="3" fill="#f26b3a"/><path d="M7 5h15v5H12v8h10v5H7z" fill="#fff1ea"/></svg><b></b></span>
      </div>
      <div class="tray">
        <svg class="t-chev" viewBox="0 0 16 10"><path d="M2 8l6-6 6 6" fill="none" stroke="#333" stroke-width="1.500"/></svg>
        <svg class="t-mic" viewBox="0 0 14 22"><rect x="4" y="1" width="6" height="13" rx="3" fill="#6f9fe0"/><path d="M1 10c0 8 12 8 12 0M7 17v4" fill="none" stroke="#3b6fbd" stroke-width="1.400"/></svg>
        <svg class="t-mon" viewBox="0 0 22 20"><path d="M14 3H1v12h17v-5M6 18h7M9 15v3" fill="none" stroke="#333" stroke-width="1.400"/><circle cx="16" cy="3" r="2.500" fill="none" stroke="#333"/><path d="M16 5v5" stroke="#333"/></svg>
        <svg class="t-vol" viewBox="0 0 20 16"><path d="M1 5h3l5-4v14l-5-4H1z" fill="none" stroke="#444" stroke-width="1.200"/><path d="M12 5c1.500 2 1.500 4 0 6M15 3c2 3 2 7 0 10" fill="none" stroke="#444" stroke-width="1.200"/></svg>
        <svg class="t-bat" viewBox="0 0 20 14"><path d="M1 3h16v10H1z" fill="#222"/><path d="M17 6h2v4h-2z" fill="#222"/><path d="M7 5h8v6H7z" fill="#d9c28f"/><path d="M2 1l4 3" stroke="#222" stroke-width="2"/></svg>
      </div>
    </div>
  </div>

  <div class="overlay">
    <h1 class="headline">T型加铺转角式平交口<br>渠化设计演示</h1>
  </div>
</div>
</body>
</html>
```

FILE: styles.css
```css
* { box-sizing: border-box; }
html, body { margin: 0; padding: 0; background: #000; }
body { width: 1521px; height: 951px; overflow: hidden; font-family: "Noto Sans CJK SC", "Noto Sans", sans-serif; }
i { font-style: normal; display: block; }
.defs { position: absolute; width: 0; height: 0; }
.page { position: relative; width: 1521px; height: 951px; overflow: hidden; }
.app { display: flex; flex-direction: column; width: 1521px; height: 951px; background: #000; filter: blur(.45px); }

.strip { height: 4px; background: #000; flex: none; }
.titlebar { height: 26px; flex: none; background: #fff; border-top: 1px solid #bbb; display: flex; align-items: center; padding-left: 357px; font-size: 13px; color: #555; position: relative; }
.ttext { white-space: nowrap; font-family: "Noto Sans", "Noto Sans CJK SC", sans-serif; font-size: 13.500px; }
.tdoc { margin-left: 22px; font-size: 13.400px; }
.winbtn { position: absolute; }
.winmin { left: 1467px; top: 12px; width: 11px; height: 1px; background: #bbb; }
.winmax { left: 1517px; top: 8px; width: 10px; height: 10px; border: 1px solid #ccc; }

.menubar { height: 24px; flex: none; display: flex; gap: 24px; align-items: center; font-size: 13.200px; color: #c4c4c4; background: linear-gradient(#505050, #6a6a6a 30%, #8c8c8c); border-top: 1px solid #777; white-space: nowrap; padding-bottom: 1px; }
.menubar span:first-child { margin-right: -3px; }

.toolbar { height: 24px; flex: none; display: flex; background: #5f5f5f; align-items: flex-start; }
.tgroup { height: 20px; display: flex; align-items: center; }
.ticons { width: 510px; background: #dedede; height: 21px; overflow: hidden; }
.ic { width: 15px; height: 15px; flex: none; margin: 0 2.5px; }
.ticons .ic:first-child { margin-left: -1px; }
.ic-drop { width: 6px; height: 16px; flex: none; margin: 0 3px -2px 0; }
.sep { width: 1px; height: 16px; background: #777; flex: none; margin: 0 2.5px; }
.combos { margin-left: 6px; width: 519px; background: #fff; }
.combo { height: 20px; display: flex; align-items: center; position: relative; background: #fff; font-size: 14px; color: #555; font-family: "Noto Sans", "Noto Sans CJK SC", sans-serif; }
.c1 { width: 131px; } .c2 { width: 130px; } .c3 { width: 127px; } .c4 { width: 131px; }
.c2, .c3, .c4 { border-left: 2px solid #666; }
.cic { background: #d6d6d6; width: 20px; height: 20px; margin: 0; padding: 2px; }
.cval { white-space: nowrap; }
.v1 { margin-left: 17px; } .v2 { margin-left: 14px; } .v3 { margin-left: 9px; } .v4 { margin-left: 19px; }
.chev { position: absolute; right: 5px; top: 5px; width: 7px; height: 7px; border-right: 1px solid #888; border-bottom: 1px solid #888; transform: rotate(45deg) scale(.9); }
.wsp { width: 191px; margin-left: 6px; background: #fff; }
.c5 { width: 151px; padding-left: 8px; }
.gearic { width: 20px; height: 20px; margin: 0; padding: 2px; background: #d6d6d6; }
.layer { margin-left: 11px; flex: 1; background: #fff; position: relative; }
.lic { width: 20px; height: 18px; margin-left: 3px; flex: none; }
.lmini { width: 60px; height: 16px; margin-left: 2px; flex: none; }
.lsq { width: 10px; height: 10px; border: 1px solid #333; margin-left: 1px; }
.lname { font-size: 14px; color: #444; margin-left: 3px; font-family: "Noto Sans", sans-serif; }

.toolbar2 { height: 28px; flex: none; background: #5c5c5c; }
.tb2in { width: 1040px; height: 26px; background: #f0f0f0; display: flex; align-items: center; gap: 10px; font-size: 13px; color: #444; white-space: nowrap; overflow: hidden; border-bottom: 1px solid #ccc; }
.tb2in u { font-family: "Noto Sans", sans-serif; font-size: 14px; }
.tb2in span:first-child { margin-left: -4px; }
.vsep { width: 1px; height: 24px; background: #bbb; flex: none; margin: 0 -6px; }

.work { height: 772px; flex: none; display: flex; background: #5c5c5c; }
.left { width: 95px; flex: none; display: flex; flex-direction: column; }
.lbar { height: 25px; flex: none; background: #bcbcbc; margin-top: 1px; }
.lbody { width: 92px; height: 739px; background: #f1f1f1; padding-top: 29px; }
.tree { width: 88px; height: 527px; background: #fff; border-right: 1px solid #bbb; border-bottom: 1px solid #bbb; font-family: "Liberation Mono", "Noto Sans CJK SC", monospace; font-size: 13px; line-height: 16px; color: #444; position: relative; overflow: hidden; padding-top: 2px; }
.tsel { width: 13px; height: 14px; background: #2a78d4; padding: 3px; }
.tsel i { width: 7px; height: 7px; border: 1px solid #dfeeff; }
.tl { white-space: nowrap; height: 16px; position: relative; }
.ind1 { padding-left: 4px; }
.ind2 { padding-left: 21px; }
.ind2 b { position: absolute; left: 9px; top: 6px; width: 4px; height: 4px; border-radius: 50%; background: #333; }
.tree .tl:nth-child(2), .tree .tl:nth-child(8) { margin-left: -5px; }
.hscroll { position: absolute; left: 0; bottom: 8px; width: 60px; height: 6px; background: #8a8a8a; }
.pbox { width: 84px; margin-top: 3px; height: 170px; padding-top: 1px; background: #fff; border-top: 1px solid #ccc; display: flex; flex-direction: column; font-family: "Liberation Mono", "Noto Sans CJK SC", monospace; font-size: 13px; color: #555; }
.phead { height: 14px; width: 82px; background: linear-gradient(#6f97ea, #4a72dc); border-radius: 0 3px 3px 0; position: relative; }
.phead i { position: absolute; right: 2px; top: 3px; width: 8px; height: 8px; border-radius: 50%; background: #dfe8f8; border: 2px solid #3a5cb0; }
.prw { height: 18px; width: 83px; border: 1px solid #bbb; border-width: 0 1px 1px 0; background: #fff; line-height: 17px; white-space: nowrap; overflow: hidden; }
.pclip { text-indent: -5px; color: #666; }

.center { width: 1330px; flex: none; display: flex; flex-direction: column; }
.upper { height: 699px; flex: none; display: flex; }
.dbar { margin: 7px 0 0 7px; width: 20px; height: 378px; background: #e2e2e2; display: flex; flex-direction: column; align-items: center; padding-top: 1px; flex: none; overflow: hidden; }
.dic { width: 16px; height: 16px; flex: none; margin: 1.650px 0; display: block; }
.dictxt { font: 700 16px/16px "Liberation Sans", sans-serif; color: #444; text-align: center; }
.canvcol { width: 1251px; margin-left: 4px; flex: none; display: flex; flex-direction: column; }
.canvas { height: 681px; background: #000; overflow: hidden; border-top: 1px solid #999; }
.cad { display: block; width: 1251px; height: 681px; }
.w { fill: none; stroke: #c4c4c4; stroke-width: 1; }
.w .t { stroke: #e8e8e8; stroke-width: 2; }
.c { fill: none; stroke: #2c8ea8; stroke-width: 1.1; }
.db { fill: none; stroke: #1d2f88; stroke-width: 1; }
.g { fill: none; stroke: #2ed84a; stroke-width: 1.700; }
.g .gd { stroke: #2aa63c; stroke-width: 1; }
.m { fill: none; stroke: #e22ad8; }
.r { fill: none; stroke: #b0182c; stroke-width: 2; }
.cadt { fill: #bdbdbd; font: 16px "Liberation Sans", sans-serif; }
.cadt.big { font-size: 22px; }
.tabs { height: 18px; display: flex; align-items: stretch; background: #e9e9e9; font-size: 12px; color: #444; position: relative; }
.nav { display: flex; width: 65px; flex: none; background: #ddd; }
.nav i { width: 16px; text-align: center; font-size: 9px; line-height: 18px; color: #555; border-right: 1px solid #eee; }
.tab { line-height: 17px; height: 17px; margin-left: 9px; white-space: nowrap; }
.tab.on { margin-left: 2px; background: #000; color: #ccc; padding: 0 8px; width: 44px; text-align: center; clip-path: polygon(0 0, 100% 0, 88% 100%, 12% 100%); }
.tsl { width: 1px; height: 18px; background: #888; transform: rotate(25deg); margin-left: 6px; }
.tab + .tsl + .tab { margin-left: 13px; }
.thandle { position: absolute; left: 1095px; top: 8px; width: 19px; height: 3px; background: #777; }
.vscroll { width: 19px; background: #f2f2f2; height: 697px; flex: none; position: relative; }
.vscroll i { position: absolute; left: 7px; top: 90px; width: 7px; height: 19px; background: #8c8c8c; }
.mbar { margin: 7px 0 0 4px; width: 20px; height: 412px; background: #e6e6e6; display: flex; flex-direction: column; align-items: center; padding-top: 2px; flex: none; }
.mgap { height: 8px; flex: none; width: 20px; background: #5c5c5c; }

.cmd { margin: 3px 0 0 5px; width: 1325px; height: 70px; display: flex; flex: none; }
.grip { width: 14px; background: #a8a8a8; border-top: 2px solid #ccc; flex: none; }
.cbody { flex: 1; background: #fff; display: flex; flex-direction: column; font-family: "Liberation Mono", "Noto Sans CJK SC", monospace; font-size: 14.600px; color: #555; padding-left: 3px; }
.cj { font-family: "Noto Sans CJK SC", sans-serif; font-size: 17px; line-height: 1; margin-right: 1px; }
.hist { height: 49px; border-bottom: 1px solid #ccc; margin-left: -3px; padding-left: 3px; }
.cl { height: 17px; line-height: 12px; white-space: nowrap; }
.cin { line-height: 21px; height: 21px; position: relative; }
.cin i { position: absolute; left: 1221px; top: 8px; width: 20px; height: 4px; background: #888; }

.props { margin-left: 2px; flex: 1; display: flex; flex-direction: column; background: #f3f3f3; border-left: 1px solid #555; border-bottom: 2px solid #555; }
.ptitle { height: 24px; margin-top: 2px; background: linear-gradient(#b4b4b4, #c8c8c8); font-size: 13px; color: #555; padding-left: 10px; line-height: 22px; }
.pbody { padding: 9px 0 0 8px; }
.psel { height: 22px; margin-bottom: 3px; background: #fff; border: 1px solid #ccc; border-right: 0; font-size: 13px; color: #444; line-height: 20px; padding-left: 2px; position: relative; }
.sect { height: 22px; margin-top: 2.500px; background: linear-gradient(90deg, #9a9a9a, #bbb); font-size: 13px; font-weight: 700; color: #444; line-height: 21px; padding-left: 5px; }
.sect.first { margin-top: 0; height: 21px; }
.row { height: 21px; display: grid; grid-template-columns: 59px 1fr; margin-left: 16px; border-left: 1px solid #bbb; font-size: 13.500px; color: #444; line-height: 19px; }
.row b { font-weight: 400; background: #dedede; border-right: 1px solid #aaa; border-bottom: 1px solid #aaa; padding-left: 2px; white-space: nowrap; overflow: hidden; }
.row span { background: #fff; border-bottom: 1px solid #aaa; padding-left: 2px; overflow: hidden; }

.status { height: 19px; flex: none; display: flex; align-items: center; background: linear-gradient(#7e7e7e, #9c9c9c); position: relative; }
.coords { width: 168px; flex: none; font: 700 13px "Liberation Mono", monospace; letter-spacing: -.9px; color: #3c3c3c; white-space: nowrap; opacity: .85; }
.sicons { display: flex; height: 19px; flex: none; }
.si { width: 19.300px; height: 19px; display: flex; align-items: center; justify-content: center; background: #bcbcbc; border-right: 1px solid #999; flex: none; }
.si svg { width: 14px; height: 14px; }
.si.on { background: #a8d2e8; }
.sright { position: absolute; left: 1045px; top: 0; right: 0; height: 19px; display: flex; align-items: center; white-space: nowrap; overflow: hidden; }
.sfold { width: 15px; height: 15px; flex: none; }
.stx { font: 13px/19px "Liberation Mono", "Noto Sans CJK SC", monospace; letter-spacing: -.9px; color: #333; flex: none; }
.sc { font-family: "Noto Sans CJK SC", sans-serif; font-size: 13px; line-height: 1; letter-spacing: 0; }
.proj { margin-left: 1px; width: 85px; }
.caret { width: 0; height: 0; border-left: 3px solid transparent; border-right: 3px solid transparent; border-top: 4px solid #222; margin: -6px 4px 0 0; flex: none; }
.model { margin-left: 2px; background: #b5b5b5; width: 30px; font-family: "Noto Sans CJK SC", sans-serif; font-size: 13px; letter-spacing: 0; }
.sq { width: 19px; }
.sdark { width: 18px; height: 19px; background: #8a8a8a; flex: none; }
.sdark.thin { width: 4px; background: #555; margin-left: 2px; }
.ratio { width: 28px; margin-left: 1px; }

.taskbar { height: 52px; flex: none; display: flex; align-items: center; position: relative; background: linear-gradient(90deg, #dcdded, #dfdeee 55%, #f0dfe9); }
.widget { position: absolute; left: 0; top: 13px; width: 4px; height: 24px; background: repeating-linear-gradient(#777 0 2px, transparent 2px 7px); }
.tcenter { position: absolute; left: 570px; top: 6px; display: flex; }
.tk { width: 48.200px; height: 42px; display: flex; align-items: center; justify-content: center; position: relative; flex: none; }
.tk svg { width: 27px; height: 27px; }
.tk-p b { position: absolute; left: 50%; bottom: 2px; width: 6px; height: 3px; margin-left: -3px; background: #777; border-radius: 2px; display: none; }
.tk-p.run b { display: block; }
.tk.active { background: linear-gradient(#f1f1f7, #f1f1f7) center / 42px 42px no-repeat; }
.tk.active b { display: block; width: 17px; margin-left: -8px; background: #2f72c4; }
.tray { position: absolute; left: 1370px; top: 14px; display: flex; align-items: center; height: 24px; }
.t-chev { width: 16px; height: 10px; flex: none; }
.t-mic { width: 14px; height: 22px; flex: none; margin-left: 16px; }
.t-mon { width: 22px; height: 20px; flex: none; margin-left: 16px; }
.t-vol { width: 20px; height: 16px; flex: none; margin-left: 6px; }
.t-bat { width: 20px; height: 14px; flex: none; margin-left: 7px; }

.overlay { position: absolute; left: 0; top: 285px; width: 1521px; height: 384px; background: rgba(55, 55, 55, .82); border-top: 1px solid rgba(255,255,255,.08); border-bottom: 1px solid rgba(255,255,255,.18); display: flex; align-items: center; justify-content: center; padding-left: 4px; }
.headline { margin: 0; font: 700 89.500px/116px "Noto Sans CJK SC", sans-serif; color: #fff; text-align: center; white-space: nowrap; }
```
